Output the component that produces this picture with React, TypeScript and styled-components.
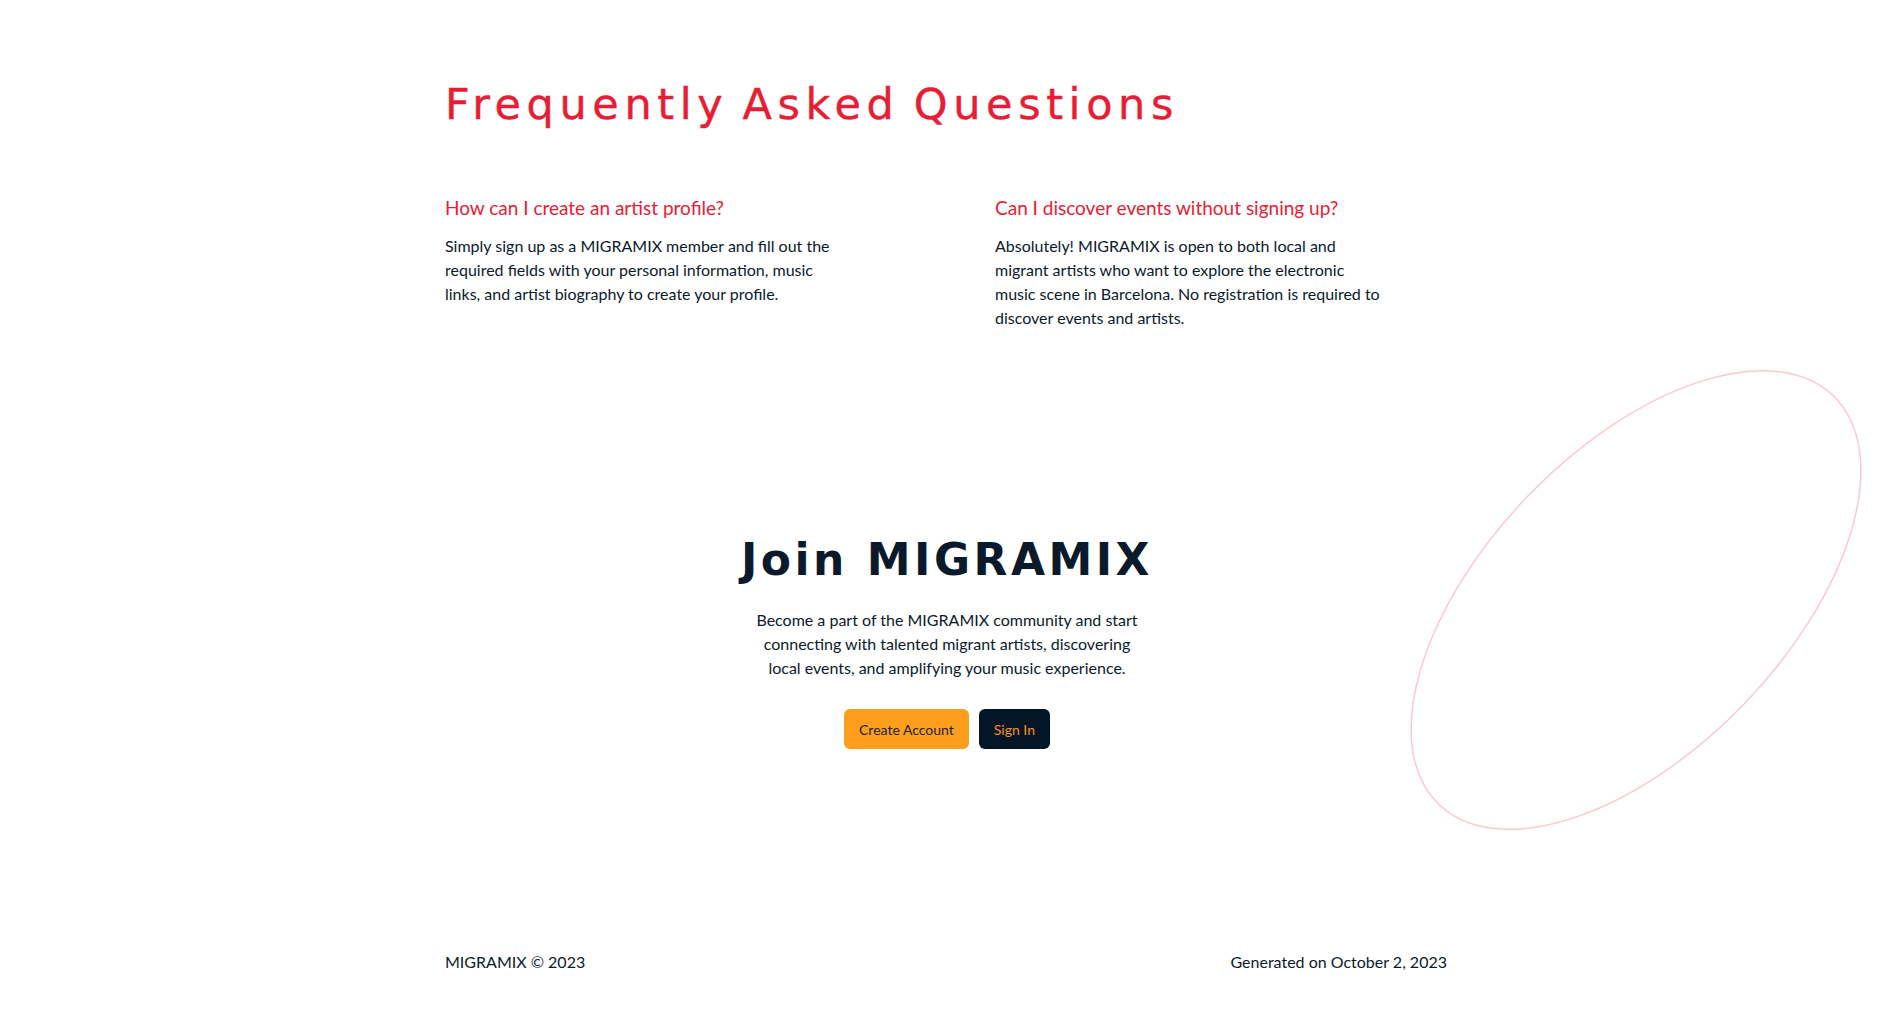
import React from "react";
import styled, { createGlobalStyle } from "styled-components";

const GlobalStyle = createGlobalStyle`
  html, body { margin: 0; padding: 0; background: #ffffff; }
  body { font-family: "Lato", "Noto Sans", sans-serif; color: #0b1a2b; }
  * { box-sizing: border-box; }
`;

const Page = styled.div`
  position: relative;
  min-height: 100vh;
  overflow: hidden;
  background: #ffffff;
`;

const Decoration = styled.svg`
  position: absolute;
  left: 1400px;
  top: 360px;
  width: 480px;
  height: 480px;
  pointer-events: none;
`;

const Container = styled.div`
  width: 1004px;
  margin: 0 auto;
  position: relative;
`;

const FaqSection = styled.section`
  padding-top: 78px;
`;

const FaqTitle = styled.h2`
  margin: 0;
  font-family: "DejaVu Sans", sans-serif;
  font-weight: 500;
  font-size: 43px;
  line-height: 52px;
  color: #e81c34;
  letter-spacing: 5.6px;
  word-spacing: -5px;
  -webkit-text-stroke: 0.4px #e81c34;
`;

const FaqGrid = styled.div`
  display: grid;
  grid-template-columns: repeat(2, 1fr);
  column-gap: 96px;
  margin-top: 64px;
`;

const FaqItem = styled.div`
  display: flex;
  flex-direction: column;
`;

const Question = styled.h3`
  margin: 0;
  font-size: 19px;
  line-height: 28px;
  font-weight: 400;
  color: #e81c34;
`;

const Answer = styled.p`
  margin: 12px 0 0;
  max-width: 392px;
  font-size: 16px;
  line-height: 24px;
  color: #0b1a2b;
`;

const JoinSection = styled.section`
  display: flex;
  flex-direction: column;
  align-items: center;
  text-align: center;
  margin-top: 204px;
`;

const JoinTitle = styled.h2`
  margin: 0;
  font-family: "DejaVu Sans", sans-serif;
  font-weight: 700;
  font-size: 44px;
  line-height: 52px;
  letter-spacing: 3.5px;
  color: #0b1a2b;
`;

const JoinText = styled.p`
  margin: 22px 0 0;
  max-width: 400px;
  font-size: 16px;
  line-height: 24px;
  color: #0b1a2b;
`;

const ButtonRow = styled.div`
  display: flex;
  gap: 10px;
  margin-top: 29px;
`;

const Button = styled.button<{ $variant: "primary" | "dark" }>`
  height: 40px;
  padding: 0 15px;
  border: none;
  border-radius: 6px;
  font-family: "Lato", "Noto Sans", sans-serif;
  font-size: 14px;
  cursor: pointer;
  background: ${(p) => (p.$variant === "primary" ? "#fd9e1c" : "#031526")};
  color: ${(p) => (p.$variant === "primary" ? "#1b2430" : "#fd8f1c")};
`;

const Footer = styled.footer`
  display: flex;
  justify-content: space-between;
  align-items: center;
  margin-top: 201px;
  padding: 0 2px 30px 0;
  font-size: 16px;
  line-height: 24px;
  color: #0b1a2b;
`;

export default function App() {
  return (
    <>
      <GlobalStyle />
      <Page>
        <Decoration viewBox="0 0 480 480" aria-hidden="true">
          <ellipse
            cx="236"
            cy="240"
            rx="284"
            ry="150"
            transform="rotate(-46 236 240)"
            fill="none"
            stroke="#fcc9d0"
            strokeWidth="1.5"
          />
        </Decoration>
        <Container>
          <FaqSection>
            <FaqTitle>Frequently Asked Questions</FaqTitle>
            <FaqGrid>
              <FaqItem>
                <Question>How can I create an artist profile?</Question>
                <Answer>
                  Simply sign up as a MIGRAMIX member and fill out the required fields with your
                  personal information, music links, and artist biography to create your profile.
                </Answer>
              </FaqItem>
              <FaqItem>
                <Question>Can I discover events without signing up?</Question>
                <Answer>
                  Absolutely! MIGRAMIX is open to both local and migrant artists who want to
                  explore the electronic music scene in Barcelona. No registration is required to
                  discover events and artists.
                </Answer>
              </FaqItem>
            </FaqGrid>
          </FaqSection>
          <JoinSection>
            <JoinTitle>Join MIGRAMIX</JoinTitle>
            <JoinText>
              Become a part of the MIGRAMIX community and start connecting with talented migrant
              artists, discovering local events, and amplifying your music experience.
            </JoinText>
            <ButtonRow>
              <Button $variant="primary">Create Account</Button>
              <Button $variant="dark">Sign In</Button>
            </ButtonRow>
          </JoinSection>
          <Footer>
            <span>MIGRAMIX © 2023</span>
            <span>Generated on October 2, 2023</span>
          </Footer>
        </Container>
      </Page>
    </>
  );
}
